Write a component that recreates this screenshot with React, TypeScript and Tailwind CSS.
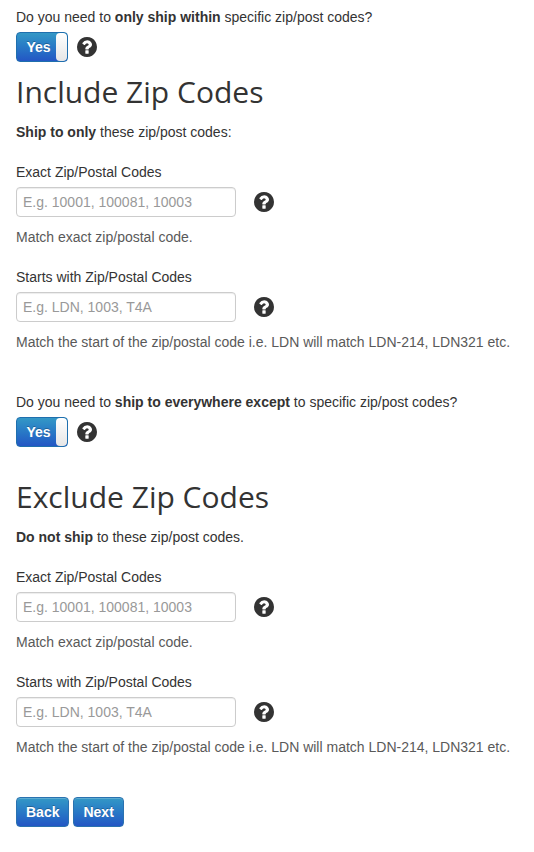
import React, { useId, useState } from 'react';

const HelpIcon = ({ topic }: { topic: string }) => (
  <button type="button" aria-label={`Help: ${topic}`} className="size-5 shrink-0 cursor-pointer text-[#333]">
    <svg viewBox="128 128 1536 1536" className="size-5" fill="currentColor" fillRule="evenodd" aria-hidden="true">
      <path d="M1024 1376v-192q0-14-9-23t-23-9h-192q-14 0-23 9t-9 23v192q0 14 9 23t23 9h192q14 0 23-9t9-23zM1280 704q0-88-55.5-163t-138.5-116-170-41q-243 0-371 213-15 24 8 42l132 100q7 6 19 6 16 0 25-12 53-68 86-92 34-24 86-24 48 0 85.500 26t37.500 59q0 38-20 60t-68 44q-63 28-115.500 86.500t-52.500 125.500v36q0 14 9 23t23 9h192q14 0 23-9t9-23q0-19 21.500-49.500t54.500-49.500q32-18 49-28.500t46-35 44.500-48 28-60.500 12.500-81zM1664 896q0 209-103 385.500t-279.500 279.500-385.500 103-385.500-103-279.500-279.500-103-385.500 103-385.500 279.500-279.500 385.500-103 385.500 103 279.500 279.500 103 385.500z" />
    </svg>
  </button>
);

interface ToggleProps {
  checked: boolean;
  onChange: (checked: boolean) => void;
  topic: string;
  children: React.ReactNode;
}

const ToggleQuestion: React.FC<ToggleProps> = ({ checked, onChange, topic, children }) => {
  const id = useId();

  return (
    <div>
      <label htmlFor={id} className="mb-[5px] block">{children}</label>
      <div className="flex items-center gap-[9px]">
        <label
          htmlFor={id}
          className={`relative flex h-[30px] w-[52px] cursor-pointer overflow-hidden rounded border text-white ${checked ? 'border-[#1f6fae] bg-linear-to-b from-[#3498c6] to-[#2456c4]' : 'flex-row-reverse border-[#bbb] bg-[#999]'}`}
        >
          <input
            id={id}
            type="checkbox"
            role="switch"
            className="sr-only"
            checked={checked}
            onChange={e => onChange(e.target.checked)}
          />
          <span className="flex-1 pl-1 text-center leading-7 font-bold text-shadow-[0_-1px_0_rgb(0_0_0/0.25)]">{checked ? 'Yes' : 'No'}</span>
          <span className="w-[11px] rounded bg-linear-to-b from-white to-[#e6e6e6]" />
        </label>
        <HelpIcon topic={topic} />
      </div>
    </div>
  );
};

interface FieldProps {
  label: string;
  placeholder: string;
  hint: string;
}

const ZipField: React.FC<FieldProps> = ({ label, placeholder, hint }) => {
  const id = useId();

  return (
    <div>
      <label htmlFor={id} className="mb-[5px] block">{label}</label>
      <div className="flex items-center gap-[18px]">
        <input
          id={id}
          type="text"
          placeholder={placeholder}
          aria-describedby={`${id}-hint`}
          className="h-[30px] w-[220px] rounded border border-[#ccc] bg-white px-1.5 text-[#555] shadow-[inset_0_1px_1px_rgb(0_0_0/0.075)] placeholder:text-[#999]"
        />
        <HelpIcon topic={label} />
      </div>
      <p id={`${id}-hint`} className="mt-2.5 text-[#595959]">{hint}</p>
    </div>
  );
};

const ZipFields = () => (
  <div className="mt-5 space-y-5">
    <ZipField
      label="Exact Zip/Postal Codes"
      placeholder="E.g. 10001, 100081, 10003"
      hint="Match exact zip/postal code."
    />
    <ZipField
      label="Starts with Zip/Postal Codes"
      placeholder="E.g. LDN, 1003, T4A"
      hint="Match the start of the zip/postal code i.e. LDN will match LDN-214, LDN321 etc."
    />
  </div>
);

const headingClass = "mb-2.5 font-['Open_Sans',sans-serif] text-[30px] leading-10";
const buttonClass = 'h-[30px] cursor-pointer rounded border border-[#2a72b0] bg-linear-to-b from-[#3498c6] to-[#2456c4] px-[9px] font-bold text-white shadow-[inset_0_1px_0_rgb(255_255_255/0.2)] text-shadow-[0_-1px_0_rgb(0_0_0/0.25)]';

export default function App() {
  const [include, setInclude] = useState(true);
  const [exclude, setExclude] = useState(true);

  return (
    <main className="min-h-screen bg-white px-4 pt-[7px] pb-6 font-['Liberation_Sans',Arial,sans-serif] text-sm leading-5 text-[#333]">
      <form onSubmit={e => e.preventDefault()}>
        <ToggleQuestion checked={include} onChange={setInclude} topic="only ship within">
          Do you need to <strong>only ship within</strong> specific zip/post codes?
        </ToggleQuestion>
        {include && (
          <section className="mt-2.5">
            <h2 className={headingClass}>Include Zip Codes</h2>
            <p><strong>Ship to only</strong> these zip/post codes:</p>
            <ZipFields />
          </section>
        )}

        <div className="mt-10">
          <ToggleQuestion checked={exclude} onChange={setExclude} topic="ship to everywhere except">
            Do you need to <strong>ship to everywhere except</strong> to specific zip/post codes?
          </ToggleQuestion>
        </div>
        {exclude && (
          <section className="mt-[30px]">
            <h2 className={headingClass}>Exclude Zip Codes</h2>
            <p><strong>Do not ship</strong> to these zip/post codes.</p>
            <ZipFields />
          </section>
        )}

        <div className="mt-10 flex gap-1">
          <button type="button" className={buttonClass}>Back</button>
          <button type="submit" className={buttonClass}>Next</button>
        </div>
      </form>
    </main>
  );
}
